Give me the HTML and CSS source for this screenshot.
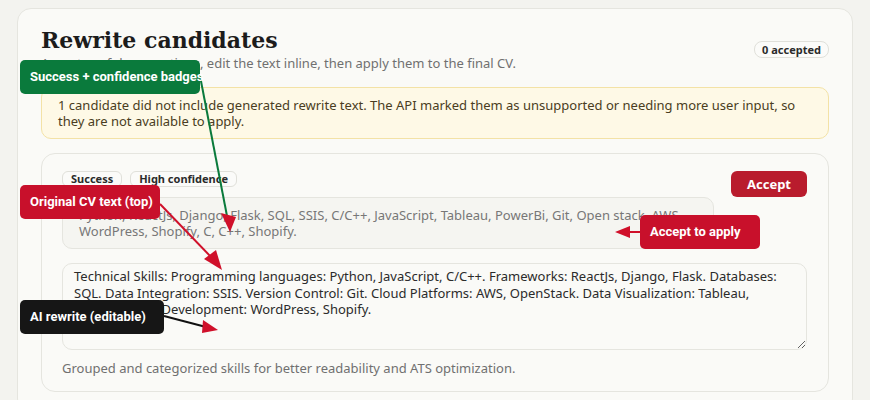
FILE: index.html
```html
<!DOCTYPE html>
<html>
<head>
    <title>Rewrite candidates</title>
    <link rel="stylesheet" href="styles.css">
</head>
<body>
    <div class="panel">
        <div class="panel-head">
            <div>
                <h1>Rewrite candidates</h1>
                <p class="subtitle">Accept useful suggestions, edit the text inline, then apply them to the final CV.</p>
            </div>
            <span class="pill">0 accepted</span>
        </div>

        <div class="notice">
            1 candidate did not include generated rewrite text. The API marked them as unsupported or needing more user input, so they are not available to apply.
        </div>

        <div class="candidate">
            <div class="cand-top">
                <div class="cand-main">
                    <div class="badges">
                        <span class="badge">Success</span>
                        <span class="badge">High confidence</span>
                    </div>
                    <div class="original">Python, ReactJs, Django, Flask, SQL, SSIS, C/C++, JavaScript, Tableau, PowerBi, Git, Open stack, AWS, WordPress, Shopify, C, C++, Shopify.</div>
                </div>
                <button class="accept-btn">Accept</button>
            </div>
            <textarea class="rewrite">Technical Skills: Programming languages: Python, JavaScript, C/C++. Frameworks: ReactJs, Django, Flask. Databases: SQL. Data Integration: SSIS. Version Control: Git. Cloud Platforms: AWS, OpenStack. Data Visualization: Tableau, PowerBi. Web Development: WordPress, Shopify.</textarea>
            <p class="reason">Grouped and categorized skills for better readability and ATS optimization.</p>
        </div>
    </div>

    <!-- annotation layer -->
    <svg class="arrows" width="870" height="400" viewBox="0 0 870 400">
        <line x1="200" y1="76" x2="227" y2="216" stroke="#0a7a3c" stroke-width="2"/>
        <polygon points="221,213 236,217 230,232" fill="#d0102a"/>
        <line x1="160" y1="204" x2="212" y2="258" stroke="#d0102a" stroke-width="2"/>
        <polygon points="204,259 216,250 222,270" fill="#d0102a"/>
        <line x1="640" y1="232" x2="628" y2="232" stroke="#d0102a" stroke-width="2"/>
        <polygon points="630,226 630,238 615,232" fill="#d0102a"/>
        <line x1="164" y1="316" x2="206" y2="327" stroke="#111" stroke-width="2"/>
        <polygon points="203,320 218,330 202,333" fill="#d0102a"/>
    </svg>
    <div class="note note-green">Success + confidence badges</div>
    <div class="note note-red note-original">Original CV text (top)</div>
    <div class="note note-red note-accept">Accept to apply</div>
    <div class="note note-dark">AI rewrite (editable)</div>
</body>
</html>
```

FILE: styles.css
```css
body {
    font-family: "Noto Sans", sans-serif;
    background-color: #f3f3ef;
    color: #2b2b2b;
    margin: 0;
    padding: 0;
    width: 870px;
    height: 400px;
    overflow: hidden;
    position: relative;
}
.panel {
    margin: 8px 17px 0;
    padding: 17px 23px 20px;
    background: #fafaf7;
    border: 1px solid #e5e5df;
    border-radius: 14px;
}
.panel-head {
    display: flex;
    justify-content: space-between;
    align-items: flex-start;
}
h1 {
    margin: 0;
    font-family: "DejaVu Serif", serif;
    font-size: 22px;
    line-height: 28px;
    color: #1c1c1c;
}
.subtitle {
    margin: 0;
    font-size: 13px;
    line-height: 18px;
    color: #707070;
}
.pill {
    margin-top: 15px;
    padding: 0 7px;
    font-size: 11px;
    line-height: 15px;
    font-weight: bold;
    border: 1px solid #e0e0da;
    border-radius: 8px;
    background: #fbfbf9;
}
.notice {
    margin-top: 15px;
    padding: 9px 16px;
    background: #fef9e6;
    border: 1px solid #f3e2a6;
    border-radius: 10px;
    font-size: 13px;
    line-height: 16px;
    color: #4a3d22;
}
.candidate {
    margin-top: 14px;
    padding: 17px 21px 14px 20px;
    border: 1px solid #e5e5df;
    border-radius: 14px;
}
.cand-top {
    display: flex;
    gap: 17px;
    align-items: flex-start;
}
.cand-main {
    flex: 1;
}
.badges {
    display: flex;
    gap: 8px;
    margin-bottom: 10px;
}
.badge {
    padding: 0 8px;
    font-size: 11px;
    line-height: 14px;
    font-weight: bold;
    border: 1px solid #e0e0da;
    border-radius: 6px;
    background: #fbfbf9;
}
.original {
    padding: 9px 16px;
    background: #f5f5f1;
    border: 1px solid #e5e5df;
    border-radius: 10px;
    font-size: 13px;
    line-height: 16px;
    color: #777;
}
.accept-btn {
    width: 76px;
    height: 26px;
    border: none;
    border-radius: 6px;
    background-color: #b91c2d;
    color: white;
    font-family: "Noto Sans", sans-serif;
    font-size: 13px;
    font-weight: bold;
    cursor: pointer;
}
.rewrite {
    display: block;
    box-sizing: border-box;
    width: 100%;
    height: 87px;
    margin-top: 14px;
    padding: 4px 11px;
    background: #fafaf7;
    border: 1px solid #e5e5df;
    border-radius: 10px;
    font-family: "Noto Sans", sans-serif;
    font-size: 13px;
    line-height: 16.5px;
    color: #2b2b2b;
}
.reason {
    margin: 9px 0 0;
    font-size: 13px;
    line-height: 18px;
    color: #707070;
}

/* annotation overlay */
.arrows {
    position: absolute;
    left: 0;
    top: 0;
}
.note {
    position: absolute;
    padding: 0 10px;
    height: 34px;
    line-height: 34px;
    border-radius: 5px;
    font-family: Roboto, sans-serif;
    font-size: 13px;
    font-weight: bold;
    color: #fff;
    white-space: nowrap;
}
.note-green {
    left: 20px;
    top: 60px;
    width: 160px;
    background: #0a7a3c;
}
.note-red {
    background: #c8102b;
}
.note-original {
    left: 20px;
    top: 185px;
    width: 120px;
}
.note-accept {
    left: 640px;
    top: 215px;
    width: 100px;
}
.note-dark {
    left: 20px;
    top: 300px;
    width: 124px;
    background: #161616;
}
```
